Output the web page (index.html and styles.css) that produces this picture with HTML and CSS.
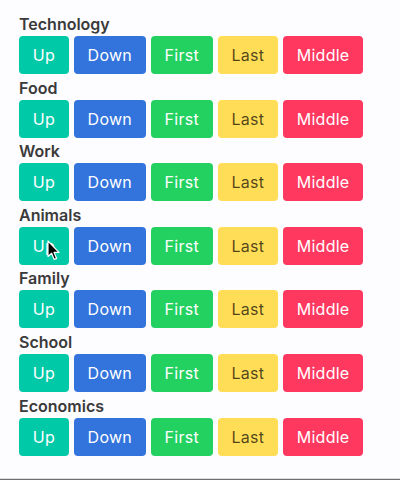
FILE: index.html
```html
<!DOCTYPE html>
<html lang="en">
<head>
<meta charset="utf-8">
<title>Buttons</title>
<link rel="stylesheet" href="styles.css">
</head>
<body>
<main class="page">
  <section class="group">
    <h2 class="group-title">Technology</h2>
    <div class="buttons">
      <button class="btn btn-up">Up</button><button class="btn btn-down">Down</button><button class="btn btn-first">First</button><button class="btn btn-last">Last</button><button class="btn btn-middle">Middle</button>
    </div>
  </section>
  <section class="group">
    <h2 class="group-title">Food</h2>
    <div class="buttons">
      <button class="btn btn-up">Up</button><button class="btn btn-down">Down</button><button class="btn btn-first">First</button><button class="btn btn-last">Last</button><button class="btn btn-middle">Middle</button>
    </div>
  </section>
  <section class="group">
    <h2 class="group-title">Work</h2>
    <div class="buttons">
      <button class="btn btn-up">Up</button><button class="btn btn-down">Down</button><button class="btn btn-first">First</button><button class="btn btn-last">Last</button><button class="btn btn-middle">Middle</button>
    </div>
  </section>
  <section class="group">
    <h2 class="group-title">Animals</h2>
    <div class="buttons">
      <button class="btn btn-up has-cursor">Up<svg class="cursor" width="14" height="21" viewBox="0 0 14 21" aria-hidden="true"><path d="M1 1 L1 16.5 L4.6 13.2 L7.2 19.4 L9.6 18.4 L7.1 12.4 L12 12.4 Z" fill="#000" stroke="#fff" stroke-width="1.2" stroke-linejoin="round"/></svg></button><button class="btn btn-down">Down</button><button class="btn btn-first">First</button><button class="btn btn-last">Last</button><button class="btn btn-middle">Middle</button>
    </div>
  </section>
  <section class="group">
    <h2 class="group-title">Family</h2>
    <div class="buttons">
      <button class="btn btn-up">Up</button><button class="btn btn-down">Down</button><button class="btn btn-first">First</button><button class="btn btn-last">Last</button><button class="btn btn-middle">Middle</button>
    </div>
  </section>
  <section class="group">
    <h2 class="group-title">School</h2>
    <div class="buttons">
      <button class="btn btn-up">Up</button><button class="btn btn-down">Down</button><button class="btn btn-first">First</button><button class="btn btn-last">Last</button><button class="btn btn-middle">Middle</button>
    </div>
  </section>
  <section class="group">
    <h2 class="group-title">Economics</h2>
    <div class="buttons">
      <button class="btn btn-up">Up</button><button class="btn btn-down">Down</button><button class="btn btn-first">First</button><button class="btn btn-last">Last</button><button class="btn btn-middle">Middle</button>
    </div>
  </section>
</main>
<div class="frame-bottom"></div>
</body>
</html>
```
FILE: styles.css
```css
html, body {
  margin: 0;
  padding: 0;
  width: 400px;
  height: 480px;
  overflow: hidden;
  background: #fdfcff;
  font-family: Inter, "Noto Sans", sans-serif;
}

body {
  position: relative;
}

.page {
  padding: 14px 0 0 19px;
  display: flex;
  flex-direction: column;
  gap: 3.6px;
}

.group {
  display: flex;
  flex-direction: column;
  gap: 2px;
}

.group-title {
  margin: 0;
  font-size: 16px;
  line-height: 20px;
  font-weight: 600;
  color: #3a3a3a;
}

.buttons {
  display: flex;
  gap: 5px;
}

.btn {
  position: relative;
  height: 38px;
  padding: 0 13.8px;
  border: none;
  border-radius: 4px;
  font-family: Inter, "Noto Sans", sans-serif;
  font-size: 16px;
  line-height: 38px;
  letter-spacing: 0.25px;
  color: #fff;
  cursor: pointer;
}

.btn-up { background: #00c9a7; }
.btn-down { background: #3273dc; }
.btn-first { background: #23d160; }
.btn-last { background: #ffdd57; color: rgba(0, 0, 0, 0.7); }
.btn-middle { background: #ff3860; }

.cursor {
  position: absolute;
  left: 28px;
  top: 13px;
}

.frame-bottom {
  position: absolute;
  left: 0;
  right: 0;
  bottom: 0;
  height: 1px;
  background: #6f6f6f;
  border-top: 1px solid #dcdcdc;
}
```
